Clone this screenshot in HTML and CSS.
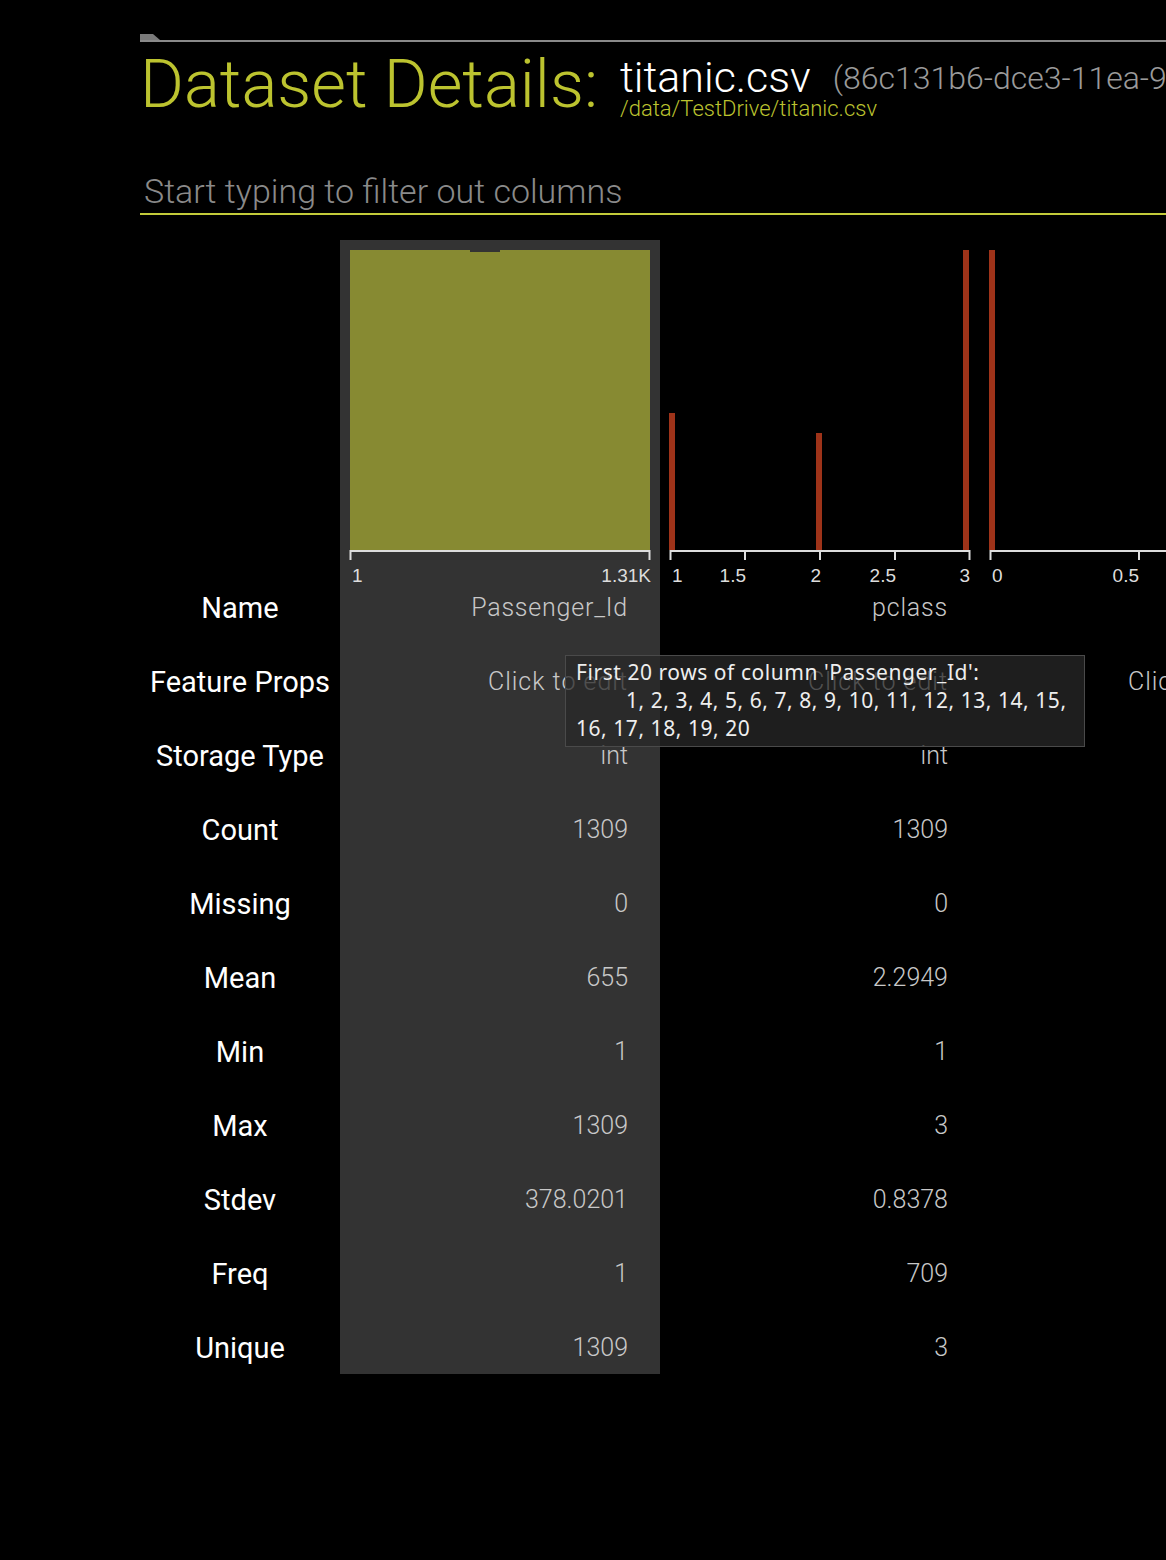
FILE: index.html
```html
<!DOCTYPE html>
<html lang="en">
<head>
<meta charset="utf-8">
<title>Dataset Details</title>
<link rel="stylesheet" href="styles.css">
</head>
<body>
<div class="page">
  <div class="topbar">
    <div class="topbar-tab"></div>
    <div class="topbar-line"></div>
  </div>
  <div class="header">
    <div class="title">Dataset Details:</div>
    <div class="file">
      <div class="file-name">titanic.csv<span class="uuid">(86c131b6-dce3-11ea-9700-0242ac110002)</span></div>
      <div class="file-path">/data/TestDrive/titanic.csv</div>
    </div>
  </div>
  <input class="filter" type="text" placeholder="Start typing to filter out columns">
  <div class="table">
    <div class="col labels">
      <div class="chart"></div>
      <div class="row">Name</div>
      <div class="row">Feature Props</div>
      <div class="row">Storage Type</div>
      <div class="row">Count</div>
      <div class="row">Missing</div>
      <div class="row">Mean</div>
      <div class="row">Min</div>
      <div class="row">Max</div>
      <div class="row">Stdev</div>
      <div class="row">Freq</div>
      <div class="row">Unique</div>
    </div>
    <div class="col active">
      <div class="chart">
        <svg width="320" height="320" viewBox="0 0 320 320">
          <rect x="10" y="10" width="300" height="300" class="bar-olive"/>
          <rect x="130" y="10" width="30" height="2" class="notch"/>
          <path d="M10.5 320V311H309.5V320" class="axis"/>
          <text x="12" y="342" class="tick">1</text>
          <text x="311" y="342" class="tick end">1.31K</text>
        </svg>
      </div>
      <div class="row name">Passenger_Id</div>
      <div class="row edit">Click to edit</div>
      <div class="row">int</div>
      <div class="row">1309</div>
      <div class="row">0</div>
      <div class="row">655</div>
      <div class="row">1</div>
      <div class="row">1309</div>
      <div class="row">378.0201</div>
      <div class="row">1</div>
      <div class="row">1309</div>
    </div>
    <div class="col">
      <div class="chart">
        <svg width="320" height="320" viewBox="0 0 320 320">
          <rect x="9" y="173" width="6" height="137" class="bar-red"/>
          <rect x="156" y="193" width="6" height="117" class="bar-red"/>
          <rect x="303" y="10" width="6" height="300" class="bar-red"/>
          <path d="M10.5 320V311H309.5V320M85 311V320M160 311V320M235 311V320" class="axis"/>
          <text x="12" y="342" class="tick">1</text>
          <text x="86" y="342" class="tick end">1.5</text>
          <text x="161" y="342" class="tick end">2</text>
          <text x="236" y="342" class="tick end">2.5</text>
          <text x="310" y="342" class="tick end">3</text>
        </svg>
      </div>
      <div class="row name">pclass</div>
      <div class="row edit">Click to edit</div>
      <div class="row">int</div>
      <div class="row">1309</div>
      <div class="row">0</div>
      <div class="row">2.2949</div>
      <div class="row">1</div>
      <div class="row">3</div>
      <div class="row">0.8378</div>
      <div class="row">709</div>
      <div class="row">3</div>
    </div>
    <div class="col">
      <div class="chart">
        <svg width="320" height="320" viewBox="0 0 320 320">
          <rect x="9" y="10" width="6" height="300" class="bar-red"/>
          <rect x="303" y="125" width="6" height="185" class="bar-red"/>
          <path d="M10.5 320V311H320M159 311V320M309.5 311V320" class="axis"/>
          <text x="12" y="342" class="tick">0</text>
          <text x="159" y="342" class="tick end">0.5</text>
          <text x="310" y="342" class="tick end">1</text>
        </svg>
      </div>
      <div class="row name">survived</div>
      <div class="row edit">Click to edit</div>
      <div class="row">int</div>
      <div class="row">1309</div>
      <div class="row">0</div>
      <div class="row">0.382</div>
      <div class="row">0</div>
      <div class="row">1</div>
      <div class="row">0.4861</div>
      <div class="row">809</div>
      <div class="row">2</div>
    </div>
    <div class="tooltip">
      <div class="tip-line">First 20 rows of column 'Passenger_Id':</div>
      <div class="tip-line tip-indent">1, 2, 3, 4, 5, 6, 7, 8, 9, 10, 11, 12, 13, 14, 15,</div>
      <div class="tip-line">16, 17, 18, 19, 20</div>
    </div>
  </div>
</div>
</body>
</html>
```

FILE: styles.css
```css
* {
  box-sizing: border-box;
}

html,
body {
  margin: 0;
  background: #000;
}

body {
  width: 1166px;
  height: 1560px;
  overflow: hidden;
  font-family: Roboto, "Liberation Sans", sans-serif;
}

.page {
  padding: 34px 0 0 140px;
}

.topbar {
  display: flex;
  flex-direction: column;
}

.topbar-tab {
  width: 20px;
  height: 6px;
  background: #7a7a7a;
  clip-path: polygon(0 0, 65% 0, 100% 100%, 0 100%);
}

.topbar-line {
  height: 2px;
  background: #8a8a8a;
}

.header {
  display: flex;
  align-items: flex-start;
  height: 69px;
  margin-top: 9px;
  white-space: nowrap;
}

.title {
  font-size: 67px;
  line-height: 67px;
  font-weight: 300;
  color: #bcc32f;
}

.file {
  margin-left: 22px;
  margin-top: 5px;
}

.file-name {
  height: 42px;
  font-size: 43px;
  line-height: 42px;
  font-weight: 300;
  color: #fff;
}

.uuid {
  font-size: 32px;
  color: #9a9a9a;
  margin-left: 22px;
  vertical-align: 3px;
}

.file-path {
  font-size: 22px;
  line-height: 22px;
  font-weight: 300;
  color: #bcc32f;
}

.filter {
  display: block;
  width: 100%;
  height: 44px;
  margin: 51px 0 0 0;
  padding: 0 0 3px 4px;
  border: none;
  border-bottom: 2px solid #c3cb3a;
  background: transparent;
  font-family: Roboto, "Liberation Sans", sans-serif;
  font-size: 34px;
  font-weight: 300;
  color: #ddd;
  outline: none;
}

.filter::placeholder {
  color: #8a8a8a;
}

.table {
  display: flex;
  margin-top: 25px;
  position: relative;
}

.col {
  flex: 0 0 320px;
}

.col.labels {
  flex-basis: 200px;
}

.col.active {
  background: #333;
}

.chart {
  height: 320px;
}

.chart svg {
  display: block;
  overflow: visible;
}

.bar-olive {
  fill: #878a32;
}

.notch {
  fill: #333;
}

.bar-red {
  fill: #9e3319;
}

.axis {
  fill: none;
  stroke: #ddd;
  stroke-width: 2;
}

.tick {
  font-family: "Liberation Sans", Arial, sans-serif;
  font-size: 19px;
  fill: #ddd;
}

.tick.end {
  text-anchor: end;
}

.row {
  height: 74px;
  padding: 30px 32px 8px 0;
  line-height: 36px;
  font-size: 25px;
  font-weight: 300;
  color: #c8c8c8;
  text-align: right;
  white-space: nowrap;
}

.row.name {
  letter-spacing: 0.8px;
}

.row.edit {
  letter-spacing: 1px;
}

.labels .row {
  padding-right: 0;
  text-align: center;
  font-size: 29px;
  font-weight: 400;
  color: #fff;
}

.tooltip {
  position: absolute;
  left: 425px;
  top: 415px;
  width: 520px;
  height: 92px;
  padding: 2px 10px;
  background: rgba(40, 40, 40, 0.75);
  border: 1px solid #4a4a4a;
  font-family: "Noto Sans", Lato, sans-serif;
  font-size: 21px;
  line-height: 28px;
  letter-spacing: 0.55px;
  color: #eee;
  white-space: nowrap;
}

.tip-indent {
  padding-left: 50px;
}
```
